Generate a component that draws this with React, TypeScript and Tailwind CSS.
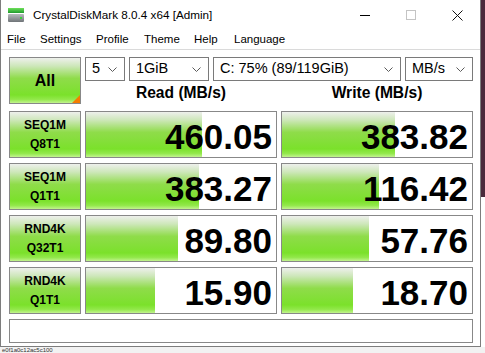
// CrystalDiskMark 8 main window
const font = { fontFamily: '"Liberation Sans", Arial, sans-serif' }

const rows = [
  { name: ['SEQ1M', 'Q8T1'], read: '460.05', readW: 116, write: '383.82', writeW: 113 },
  { name: ['SEQ1M', 'Q1T1'], read: '383.27', readW: 113, write: '116.42', writeW: 97 },
  { name: ['RND4K', 'Q32T1'], read: '89.80', readW: 92, write: '57.76', writeW: 87 },
  { name: ['RND4K', 'Q1T1'], read: '15.90', readW: 69, write: '18.70', writeW: 71 },
]

const green =
  'bg-[linear-gradient(to_bottom,#eef0ec_0%,#cde7b9_18%,#8fdc4a_45%,#7be12b_82%,#92e84a_92%,#c2f38f_100%)]'

function Chevron() {
  return (
    <svg width="9" height="5" viewBox="0 0 9 5" className="shrink-0">
      <path d="M0.5 0.5 L4.5 4.5 L8.5 0.5" fill="none" stroke="#5a5a5a" strokeWidth="1" />
    </svg>
  )
}

function Combo({ text, width }: { text: string; width: string }) {
  return (
    <div
      className={`${width} h-[24px] border border-[#7a7a7a] bg-white flex items-center justify-between pl-[6px] pr-[7px] text-[14.5px] text-black`}
    >
      <span>{text}</span>
      <Chevron />
    </div>
  )
}

function Score({ value, barW }: { value: string; barW: number }) {
  return (
    <div className="relative w-[192px] h-[47px] border border-[#888] bg-white">
      <div className={`absolute left-0 top-0 bottom-0 ${green}`} style={{ width: barW }} />
      <div className="relative h-full flex items-center justify-end pr-[4px] pt-[4px] text-[35px] font-bold text-black leading-none">
        {value}
      </div>
    </div>
  )
}

function AppIcon() {
  return (
    <svg width="16" height="16" viewBox="0 0 16 16">
      <defs>
        <linearGradient id="gtop" x1="0" y1="0" x2="0" y2="1">
          <stop offset="0" stopColor="#6ee05a" />
          <stop offset="1" stopColor="#1f9a2e" />
        </linearGradient>
        <linearGradient id="gbox" x1="0" y1="0" x2="0" y2="1">
          <stop offset="0" stopColor="#b8bcbf" />
          <stop offset="1" stopColor="#6f7478" />
        </linearGradient>
      </defs>
      <rect x="0" y="1" width="16" height="5" fill="url(#gtop)" />
      <rect x="0" y="7" width="16" height="8" rx="1" fill="url(#gbox)" />
      <rect x="12" y="10" width="2" height="2" fill="#3cd23c" />
    </svg>
  )
}

export default function App() {
  return (
    <div className="w-[485px] h-[353px] flex flex-col overflow-hidden bg-white" style={font}>
      <div className="flex h-[347px]">
        {/* window */}
        <div className="w-[481px] h-full flex flex-col bg-white border-l border-r border-b border-[#7d7d7d]">
          {/* title bar */}
          <div className="h-[30px] flex items-center">
            <div className="pl-[7px] pr-[9px] flex items-center">
              <AppIcon />
            </div>
            <span className="text-[11.7px] text-black">CrystalDiskMark 8.0.4 x64 [Admin]</span>
            <div className="ml-auto flex h-full">
              <div className="w-[46px] h-full flex items-center justify-center">
                <div className="w-[10px] h-px bg-black" />
              </div>
              <div className="w-[46px] h-full flex items-center justify-center">
                <div className="w-[10px] h-[10px] border border-[#c4c4c4]" />
              </div>
              <div className="w-[46px] h-full flex items-center justify-center">
                <svg width="11" height="11" viewBox="0 0 11 11">
                  <path d="M0.5 0.5 L10.5 10.5 M10.5 0.5 L0.5 10.5" stroke="#111" strokeWidth="1" />
                </svg>
              </div>
            </div>
          </div>

          {/* menu bar */}
          <div className="h-[20px] flex items-center pl-[6px] text-[11.5px] text-black border-b border-[#dadada]">
            <span className="w-[33px]">File</span>
            <span className="w-[56px]">Settings</span>
            <span className="w-[48px]">Profile</span>
            <span className="w-[50px]">Theme</span>
            <span className="w-[40px]">Help</span>
            <span>Language</span>
          </div>

          {/* body */}
          <div className="flex flex-col gap-[5px] pl-[8px] pt-[7px]">
            <div className="flex gap-[4px]">
              <div
                className={`relative w-[72px] h-[47px] border border-[#888] ${green} flex items-center justify-center text-[16px] font-bold text-black`}
              >
                All
                <div className="absolute right-0 bottom-0 w-0 h-0 border-l-[8px] border-l-transparent border-b-[8px] border-b-[#f57c00]" />
              </div>
              <div className="flex flex-col">
                <div className="flex gap-[4px]">
                  <Combo text="5" width="w-[40px]" />
                  <Combo text="1GiB" width="w-[80px]" />
                  <Combo text="C: 75% (89/119GiB)" width="w-[188px]" />
                  <Combo text="MB/s" width="w-[68px]" />
                </div>
                <div className="flex gap-[4px] flex-1 items-end pb-[2px]">
                  <div className="w-[192px] text-center text-[15.6px] font-bold text-black">Read (MB/s)</div>
                  <div className="w-[192px] text-center text-[15.6px] font-bold text-black">Write (MB/s)</div>
                </div>
              </div>
            </div>

            {rows.map((r) => (
              <div key={r.name.join('')} className="flex gap-[4px]">
                <div
                  className={`w-[72px] h-[47px] border border-[#888] ${green} flex flex-col items-center justify-center text-[12px] leading-[19px] font-bold text-black`}
                >
                  <span>{r.name[0]}</span>
                  <span>{r.name[1]}</span>
                </div>
                <Score value={r.read} barW={r.readW} />
                <Score value={r.write} barW={r.writeW} />
              </div>
            ))}

            <div className="w-[464px] h-[24px] border border-[#888] bg-white" />
          </div>
        </div>

        {/* desktop edge on the right */}
        <div className="flex-1 flex flex-col">
          <div className="h-[197px] bg-[#4b2a3b]" />
          <div className="flex-1 bg-white" />
        </div>
      </div>

      {/* what shows below the window */}
      <div className="h-[6px] overflow-hidden bg-[#f2f2f2] flex items-center">
        <div className="pl-[2px] text-[6px] leading-[6px] text-[#333] whitespace-nowrap">
          e0f1a0c12ac5c100
        </div>
      </div>
    </div>
  )
}
